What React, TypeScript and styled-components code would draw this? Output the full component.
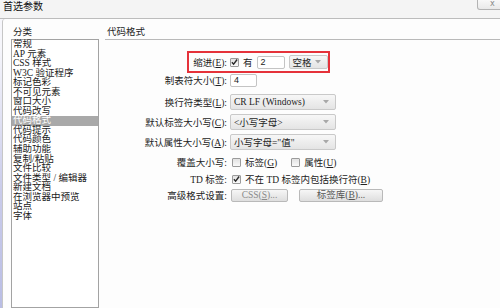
import React from 'react';
import styled, { createGlobalStyle } from 'styled-components';

const GlobalStyle = createGlobalStyle`
  html, body {
    margin: 0;
    padding: 0;
    background: #fdfdfd;
  }
  * {
    box-sizing: border-box;
  }
`;

const FONT = `"Liberation Serif", "Noto Sans CJK SC", sans-serif`;

const Window = styled.div`
  width: 500px;
  height: 308px;
  overflow: hidden;
  display: flex;
  flex-direction: column;
  font-family: ${FONT};
  font-size: 9.5px;
  color: #222;
  background: #fdfdfd;
`;

const TitleBar = styled.div`
  height: 19px;
  flex: none;
  display: flex;
  align-items: flex-start;
  background: #f4f4f4;
  border-bottom: 1px solid #bcbcbc;
`;

const Title = styled.div`
  font-size: 10px;
  line-height: 10px;
  padding: 2px 0 0 3px;
  color: #111;
`;

const CloseButton = styled.div`
  margin-left: auto;
  width: 26px;
  height: 10px;
  margin-right: -3px;
  border: 1px solid #b3b3b3;
  border-top: none;
  border-radius: 0 0 3px 3px;
  background: linear-gradient(#f8f8f8, #e9e9e9);
  color: #888;
  font-family: "DejaVu Sans", sans-serif;
  font-size: 8px;
  line-height: 8px;
  padding-left: 12px;
`;

const Main = styled.div`
  flex: 1;
  display: flex;
  background: linear-gradient(#f6f6fb 10%, #c9cbea 60%, #b9bde4);
`;

const Frame = styled.div`
  flex: 1;
  margin-left: 2px;
  display: flex;
  padding-left: 8px;
  background: #fdfdfd;
  border-left: 1px solid #c6c6c6;
  border-top-left-radius: 3px;
`;

const LeftCol = styled.div`
  width: 88px;
  flex: none;
  display: flex;
  flex-direction: column;
`;

const Caption = styled.div<{ $rule?: boolean }>`
  height: ${(p) => (p.$rule ? 21 : 20)}px;
  flex: none;
  padding: 8px 0 0 2px;
  line-height: 10px;
  color: #222;
  border-bottom: ${(p) => (p.$rule ? '1px solid #b9b9b9' : 'none')};
`;

const List = styled.div`
  flex: 1;
  border: 1px solid #a3a3a3;
  background: #fff;
`;

const ListItem = styled.div<{ $selected?: boolean }>`
  height: 9.55px;
  line-height: 9.55px;
  padding-left: 1px;
  white-space: nowrap;
  color: ${(p) => (p.$selected ? '#fff' : '#1a1a1a')};
  background: ${(p) => (p.$selected ? '#a9a9a9' : 'transparent')};
`;

const RightCol = styled.div`
  flex: 1;
  margin-left: 6px;
  display: flex;
  flex-direction: column;
`;

const Form = styled.div`
  position: relative;
  padding-top: 11px;
`;

const Highlight = styled.div`
  position: absolute;
  left: 82px;
  top: 11px;
  width: 143px;
  height: 22px;
  border: 2px solid #e5323a;
`;

const Row = styled.div<{ $h: number; $mt?: number }>`
  display: grid;
  grid-template-columns: 122px auto;
  column-gap: 3px;
  align-items: center;
  height: ${(p) => p.$h}px;
  margin-top: ${(p) => p.$mt ?? 0}px;
`;

const Label = styled.div`
  text-align: right;
  white-space: nowrap;
  color: #222;
`;

const Controls = styled.div<{ $indent?: number }>`
  display: flex;
  align-items: center;
  gap: 4px;
  padding-left: ${(p) => p.$indent ?? 0}px;
  white-space: nowrap;
`;

const TextInput = styled.div<{ $w: number }>`
  width: ${(p) => p.$w}px;
  height: 13px;
  border: 1px solid #c4c4c4;
  border-radius: 2px;
  background: #fff;
  line-height: 11px;
  padding-left: 3px;
  font-family: "Liberation Sans", sans-serif;
  font-size: 9px;
`;

const Select = styled.div<{ $w: number; $h: number }>`
  width: ${(p) => p.$w}px;
  height: ${(p) => p.$h}px;
  border: 1px solid #c9c9c9;
  border-radius: 2px;
  background: linear-gradient(#f7f7f7, #e4e4e4);
  display: flex;
  align-items: center;
  padding: 0 6px 0 3px;
  color: #1e1e1e;
`;

const SelectText = styled.span`
  flex: 1;
  white-space: nowrap;
`;

const Box = styled.div`
  width: 9px;
  height: 9px;
  border: 1px solid #9b9b9b;
  border-radius: 1px;
  background: linear-gradient(#e2e2e2, #fafafa);
  display: flex;
  align-items: center;
  justify-content: center;
`;

const Button = styled.div<{ $w: number; $dim?: boolean }>`
  width: ${(p) => p.$w}px;
  height: 13px;
  border: 1px solid #b9b9b9;
  border-radius: 2px;
  background: linear-gradient(#f6f6f6, #dedede);
  display: flex;
  align-items: center;
  justify-content: center;
  line-height: 11px;
  color: ${(p) => (p.$dim ? '#8a8a8a' : '#555')};
`;

const Key = styled.span`
  text-decoration: underline;
`;

function Arrow() {
  return (
    <svg width="6" height="4" viewBox="0 0 6 4">
      <path d="M0 0 L6 0 L3 3.5 Z" fill="#a8a8a8" />
    </svg>
  );
}

function Check({ checked }: { checked?: boolean }) {
  return (
    <Box>
      {checked && (
        <svg width="8" height="8" viewBox="0 0 8 8">
          <path d="M1 4.2 L3 6.4 L7 1.2" stroke="#2a2a2a" strokeWidth="1.6" fill="none" />
        </svg>
      )}
    </Box>
  );
}

function Dropdown({ w, h, text }: { w: number; h: number; text: React.ReactNode }) {
  return (
    <Select $w={w} $h={h}>
      <SelectText>{text}</SelectText>
      <Arrow />
    </Select>
  );
}

const categories = [
  '常规',
  'AP 元素',
  'CSS 样式',
  'W3C 验证程序',
  '标记色彩',
  '不可见元素',
  '窗口大小',
  '代码改写',
  '代码格式',
  '代码提示',
  '代码颜色',
  '辅助功能',
  '复制/粘贴',
  '文件比较',
  '文件类型 / 编辑器',
  '新建文档',
  '在浏览器中预览',
  '站点',
  '字体',
];

function Acc({ k }: { k: string }) {
  return (
    <>
      (<Key>{k}</Key>)
    </>
  );
}

export default function App() {
  return (
    <>
      <GlobalStyle />
      <Window>
        <TitleBar>
          <Title>首选参数</Title>
          <CloseButton>x</CloseButton>
        </TitleBar>
        <Main>
          <Frame>
            <LeftCol>
              <Caption>分类</Caption>
              <List>
                {categories.map((c) => (
                  <ListItem key={c} $selected={c === '代码格式'}>
                    {c}
                  </ListItem>
                ))}
              </List>
            </LeftCol>
            <RightCol>
              <Caption $rule>代码格式</Caption>
              <Form>
                <Highlight />
                <Row $h={22}>
                  <Label>
                    缩进<Acc k="E" />:
                  </Label>
                  <Controls>
                    <Check checked />
                    <span>有</span>
                    <TextInput $w={28}>2</TextInput>
                    <Dropdown w={39} h={14} text="空格" />
                  </Controls>
                </Row>
                <Row $h={14}>
                  <Label>
                    制表符大小<Acc k="T" />:
                  </Label>
                  <Controls>
                    <TextInput $w={27}>4</TextInput>
                  </Controls>
                </Row>
                <Row $h={16} $mt={7}>
                  <Label>
                    换行符类型<Acc k="L" />:
                  </Label>
                  <Controls>
                    <Dropdown w={106} h={16} text="CR LF (Windows)" />
                  </Controls>
                </Row>
                <Row $h={16} $mt={4}>
                  <Label>
                    默认标签大小写<Acc k="C" />:
                  </Label>
                  <Controls>
                    <Dropdown w={106} h={16} text="<小写字母>" />
                  </Controls>
                </Row>
                <Row $h={16} $mt={4}>
                  <Label>
                    默认属性大小写<Acc k="A" />:
                  </Label>
                  <Controls>
                    <Dropdown w={106} h={16} text={'小写字母="值"'} />
                  </Controls>
                </Row>
                <Row $h={16} $mt={4}>
                  <Label>覆盖大小写:</Label>
                  <Controls $indent={2}>
                    <Check />
                    <span>
                      标签<Acc k="G" />
                    </span>
                    <span style={{ width: 6 }} />
                    <Check />
                    <span>
                      属性<Acc k="U" />
                    </span>
                  </Controls>
                </Row>
                <Row $h={16} $mt={1}>
                  <Label>TD 标签:</Label>
                  <Controls $indent={2}>
                    <Check checked />
                    <span>
                      不在 TD 标签内包括换行符<Acc k="B" />
                    </span>
                  </Controls>
                </Row>
                <Row $h={14} $mt={1}>
                  <Label>高级格式设置:</Label>
                  <Controls $indent={1}>
                    <Button $w={57} $dim>
                      CSS<Acc k="S" />...
                    </Button>
                    <span style={{ width: 3 }} />
                    <Button $w={84}>
                      标签库<Acc k="B" />...
                    </Button>
                  </Controls>
                </Row>
              </Form>
            </RightCol>
          </Frame>
        </Main>
      </Window>
    </>
  );
}
